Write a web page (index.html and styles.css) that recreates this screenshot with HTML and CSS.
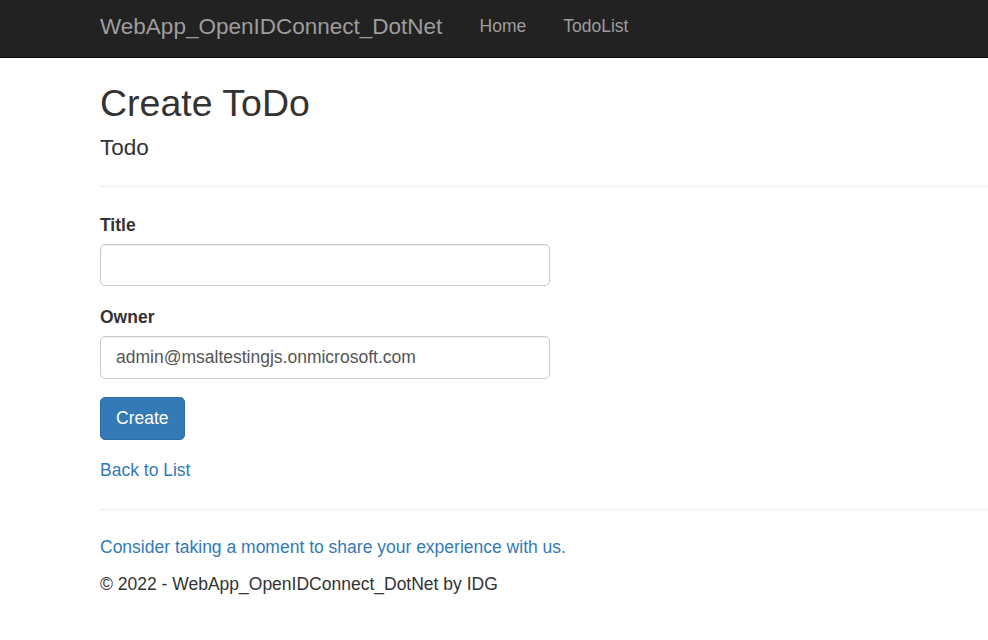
FILE: index.html
```html
<!DOCTYPE html>
<html lang="en">
<head>
    <meta charset="UTF-8">
    <title>Create ToDo - WebApp_OpenIDConnect_DotNet</title>
    <link rel="stylesheet" href="styles.css">
</head>
<body>
    <div class="navbar">
        <div class="container nav-inner">
            <a class="navbar-brand" href="#">WebApp_OpenIDConnect_DotNet</a>
            <ul class="nav">
                <li><a href="#">Home</a></li>
                <li><a href="#">TodoList</a></li>
            </ul>
        </div>
    </div>

    <div class="container body-content">
        <h2>Create ToDo</h2>

        <form class="form-horizontal">
            <h4>Todo</h4>
            <hr>
            <div class="form-group">
                <label for="Title">Title</label>
                <input type="text" id="Title" class="form-control">
            </div>
            <div class="form-group">
                <label for="Owner">Owner</label>
                <input type="text" id="Owner" class="form-control" value="admin@msaltestingjs.onmicrosoft.com">
            </div>
            <div class="form-group form-actions">
                <button type="button" class="btn btn-primary">Create</button>
            </div>
        </form>

        <div>
            <a href="#">Back to List</a>
        </div>

        <hr>
        <footer>
            <p><a href="#">Consider taking a moment to share your experience with us.</a></p>
            <p>&copy; 2022 - WebApp_OpenIDConnect_DotNet by IDG</p>
        </footer>
    </div>
</body>
</html>
```

FILE: styles.css
```css
body {
    font-family: "Liberation Sans", Arial, Helvetica, sans-serif;
    font-size: 17.5px;
    line-height: 25px;
    color: #333;
    background-color: #fff;
    margin: 0;
}

a {
    color: #337ab7;
    text-decoration: none;
}

.container {
    padding-left: 100px;
}

/* top bar */
.navbar {
    background-color: #222;
    border-bottom: 1px solid #080808;
    height: 57px;
}

.nav-inner {
    display: flex;
    align-items: flex-start;
}

.navbar-brand {
    color: #9d9d9d;
    font-size: 22.5px;
    line-height: 25px;
    padding: 14px 18.75px 0 0;
}

.nav {
    display: flex;
    list-style: none;
    margin: 0;
    padding: 0;
}

.nav a {
    display: block;
    color: #9d9d9d;
    line-height: 25px;
    padding: 14px 18.5px 0;
}

/* content */
h2 {
    font-size: 37.5px;
    font-weight: 500;
    line-height: 1.1;
    margin: 25px 0 11.5px;
}

h4 {
    font-size: 22.5px;
    font-weight: 500;
    line-height: 1.1;
    margin: 0 0 12.5px;
}

hr {
    border: 0;
    border-top: 1px solid #eee;
    margin: 26px 0 25px;
}

.form-horizontal hr {
    margin: 25px 0 26px;
}

.form-group {
    margin-bottom: 18.5px;
}

.form-actions {
    margin-bottom: 17.5px;
}

label {
    display: block;
    font-weight: bold;
    margin-bottom: 6.25px;
}

.form-control {
    display: block;
    box-sizing: border-box;
    width: 450px;
    height: 42.5px;
    padding: 7.5px 15px;
    font-family: inherit;
    font-size: 17.5px;
    color: #555;
    background-color: #fff;
    border: 1px solid #ccc;
    border-radius: 5px;
    box-shadow: inset 0 1px 1px rgba(0, 0, 0, 0.075);
}

.btn {
    font-family: inherit;
    font-size: 17.5px;
    line-height: 25px;
    padding: 8px 15px;
    border-radius: 5px;
    cursor: pointer;
}

.btn-primary {
    color: #fff;
    background-color: #337ab7;
    border: 1px solid #2e6da4;
}

footer p {
    margin: 0 0 12px;
}
```
